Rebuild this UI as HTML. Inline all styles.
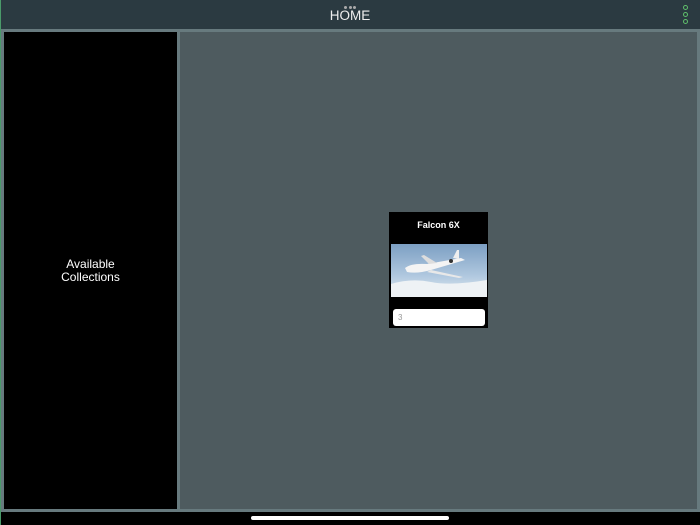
<!DOCTYPE html>
<html><head><meta charset="utf-8"><style>
*{margin:0;padding:0;box-sizing:border-box}
body{width:700px;height:525px;background:#000;position:relative;overflow:hidden;font-family:"Liberation Sans",sans-serif}
.hdr{position:absolute;left:0;top:0;width:700px;height:29px;background:#2b3a41}
.hdr .t{position:absolute;left:0;width:700px;top:8px;text-align:center;color:#eee;font-size:13.5px}
.d{position:absolute;top:6px;width:3px;height:3px;border-radius:50%;background:#aaa}
.gd{position:absolute;left:683px;width:5px;height:5px;border:1.3px solid #5fbf6b;border-radius:50%}
.frame{position:absolute;left:0;top:29px;width:700px;height:483px;background:#677a7e}
.main{position:absolute;left:180px;top:32px;width:517px;height:477px;background:#4e5b5f}
.left{position:absolute;left:4px;top:32px;width:173px;height:477px;background:#000;color:#fff;font-size:12px;text-align:center;display:flex;align-items:center;justify-content:center;line-height:13px}
.edge{position:absolute;left:0;top:0;width:1px;height:525px;background:#4a9a6a}
.card{position:absolute;left:389px;top:212px;width:99px;height:116px;background:#000}
.card .n{position:absolute;top:8px;width:100%;text-align:center;color:#fff;font-size:9px;font-weight:bold}
.img{position:absolute;left:2px;top:32px;width:96px;height:53px;background:linear-gradient(#7c9fc3,#b0c8df 60%,#e4ecf2)}
.inp{position:absolute;left:4px;top:97px;width:92px;height:17px;background:#fff;border-radius:3px;color:#999;font-size:8px;padding:4px 5px}
.bar{position:absolute;left:251px;top:516px;width:198px;height:4px;border-radius:2px;background:#fff}
</style></head><body>
<div class="hdr"><div class="t">HOME</div>
<div class="d" style="left:344px"></div><div class="d" style="left:348.5px"></div><div class="d" style="left:353px"></div>
<div class="gd" style="top:5px"></div><div class="gd" style="top:12px"></div><div class="gd" style="top:19px"></div></div>
<div class="frame"></div>
<div class="main"></div>
<div class="left">Available<br>Collections</div>
<div class="card"><div class="n">Falcon 6X</div>
<div class="img"><svg width="96" height="53" viewBox="0 0 96 53">
<path d="M0 40 Q20 34 40 38 T96 36 L96 53 L0 53Z" fill="#eef2f5"/>
<path d="M14 24 Q20 19 36 20 L70 14 L74 16 L40 26 Q26 30 16 28Z" fill="#f4f4f4"/>
<path d="M38 20 L30 12 L33 11 L46 19Z" fill="#ddd"/>
<path d="M40 26 L72 33 L68 34 L36 28Z" fill="#e8e8e8"/>
<path d="M62 14 L66 6 L68 6 L68 15Z" fill="#eee"/>
<circle cx="60" cy="17" r="2" fill="#333"/>
</svg></div>
<div class="inp">3</div></div>
<div class="edge"></div>
<div class="bar"></div>
</body></html>
